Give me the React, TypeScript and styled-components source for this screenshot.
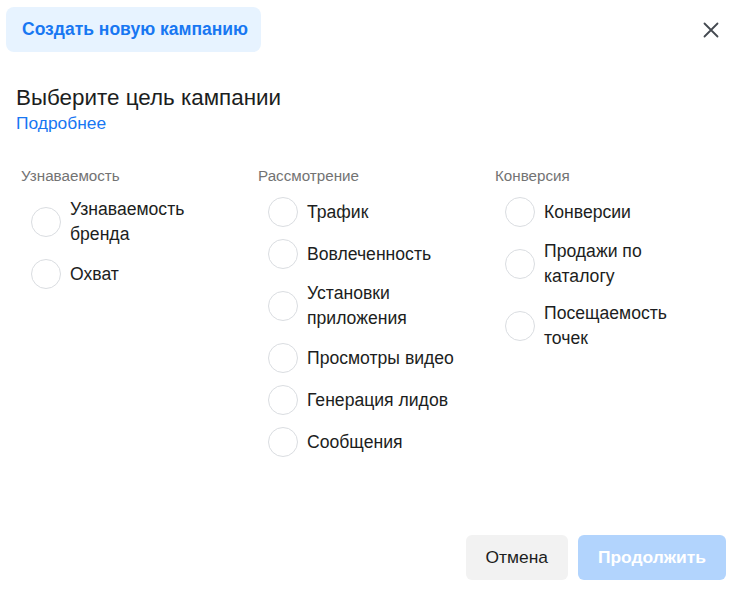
import styled, { createGlobalStyle } from "styled-components";

const GlobalStyle = createGlobalStyle`
  html, body {
    margin: 0;
    padding: 0;
    background: #fff;
    font-family: "Liberation Sans", Arial, sans-serif;
  }
`;

const Dialog = styled.div`
  width: 743px;
  height: 593px;
  box-sizing: border-box;
  display: flex;
  flex-direction: column;
  background: #fff;
`;

const TopBar = styled.div`
  display: flex;
  align-items: center;
  justify-content: space-between;
  padding: 7px 22px 0 6px;
`;

const CreateTab = styled.div`
  height: 45px;
  width: 255px;
  box-sizing: border-box;
  display: flex;
  align-items: center;
  padding-left: 16px;
  border-radius: 8px;
  background: #e7f3ff;
  color: #1877f2;
  font-size: 17.5px;
  font-weight: bold;
  white-space: nowrap;
`;

const CloseButton = styled.button`
  border: none;
  background: none;
  padding: 0;
  width: 20px;
  height: 20px;
  display: flex;
  align-items: center;
  justify-content: center;
  cursor: pointer;
`;

const Intro = styled.div`
  padding: 33px 16px 0 16px;
`;

const Title = styled.h2`
  margin: 0;
  font-size: 22.4px;
  font-weight: normal;
  line-height: 26px;
  color: #1c1e21;
`;

const MoreLink = styled.a`
  display: block;
  margin-top: 1px;
  font-size: 17.4px;
  line-height: 22px;
  color: #1877f2;
  text-decoration: none;
`;

const Columns = styled.div`
  display: grid;
  grid-template-columns: 237px 237px 237px;
  padding: 33px 0 0 21px;
`;

const Column = styled.div`
  display: flex;
  flex-direction: column;
`;

const ColumnTitle = styled.div`
  font-size: 15.2px;
  line-height: 18px;
  color: #737373;
  margin-bottom: 12px;
`;

const Options = styled.div`
  display: flex;
  flex-direction: column;
  gap: 12px;
  padding-left: 10px;
`;

const Option = styled.label`
  display: flex;
  align-items: center;
  gap: 9px;
  min-height: 30px;
  cursor: pointer;
`;

const Radio = styled.span`
  flex: none;
  width: 30px;
  height: 30px;
  box-sizing: border-box;
  border-radius: 50%;
  border: 1px solid #dadde1;
  background: #fff;
`;

const OptionText = styled.span`
  font-size: 17.6px;
  line-height: 25px;
  color: #1c1e21;
  width: 160px;
`;

const Footer = styled.div`
  margin-top: auto;
  display: flex;
  justify-content: flex-end;
  gap: 10px;
  padding: 0 17px 13px 0;
`;

const FooterButton = styled.button<{ $primary?: boolean }>`
  height: 45px;
  border: none;
  border-radius: 6px;
  font-family: inherit;
  font-size: 17.4px;
  padding: 0 20px;
  font-weight: ${({ $primary }) => ($primary ? "bold" : "normal")};
  background: ${({ $primary }) => ($primary ? "#b2d4fd" : "#f2f2f2")};
  color: ${({ $primary }) => ($primary ? "#fff" : "#1c1e21")};
  cursor: pointer;
`;

const groups = [
  { title: "Узнаваемость", items: ["Узнаваемость бренда", "Охват"] },
  {
    title: "Рассмотрение",
    items: [
      "Трафик",
      "Вовлеченность",
      "Установки приложения",
      "Просмотры видео",
      "Генерация лидов",
      "Сообщения",
    ],
  },
  {
    title: "Конверсия",
    items: ["Конверсии", "Продажи по каталогу", "Посещаемость точек"],
  },
];

export default function App() {
  return (
    <>
      <GlobalStyle />
      <Dialog>
        <TopBar>
          <CreateTab>Создать новую кампанию</CreateTab>
          <CloseButton aria-label="Закрыть">
            <svg width="16" height="16" viewBox="0 0 16 16">
              <path
                d="M1.5 1.5 L14.5 14.5 M14.5 1.5 L1.5 14.5"
                stroke="#444950"
                strokeWidth="1.8"
                strokeLinecap="round"
              />
            </svg>
          </CloseButton>
        </TopBar>
        <Intro>
          <Title>Выберите цель кампании</Title>
          <MoreLink href="#">Подробнее</MoreLink>
        </Intro>
        <Columns>
          {groups.map((g) => (
            <Column key={g.title}>
              <ColumnTitle>{g.title}</ColumnTitle>
              <Options>
                {g.items.map((item) => (
                  <Option key={item}>
                    <Radio />
                    <OptionText>{item}</OptionText>
                  </Option>
                ))}
              </Options>
            </Column>
          ))}
        </Columns>
        <Footer>
          <FooterButton>Отмена</FooterButton>
          <FooterButton $primary>Продолжить</FooterButton>
        </Footer>
      </Dialog>
    </>
  );
}
